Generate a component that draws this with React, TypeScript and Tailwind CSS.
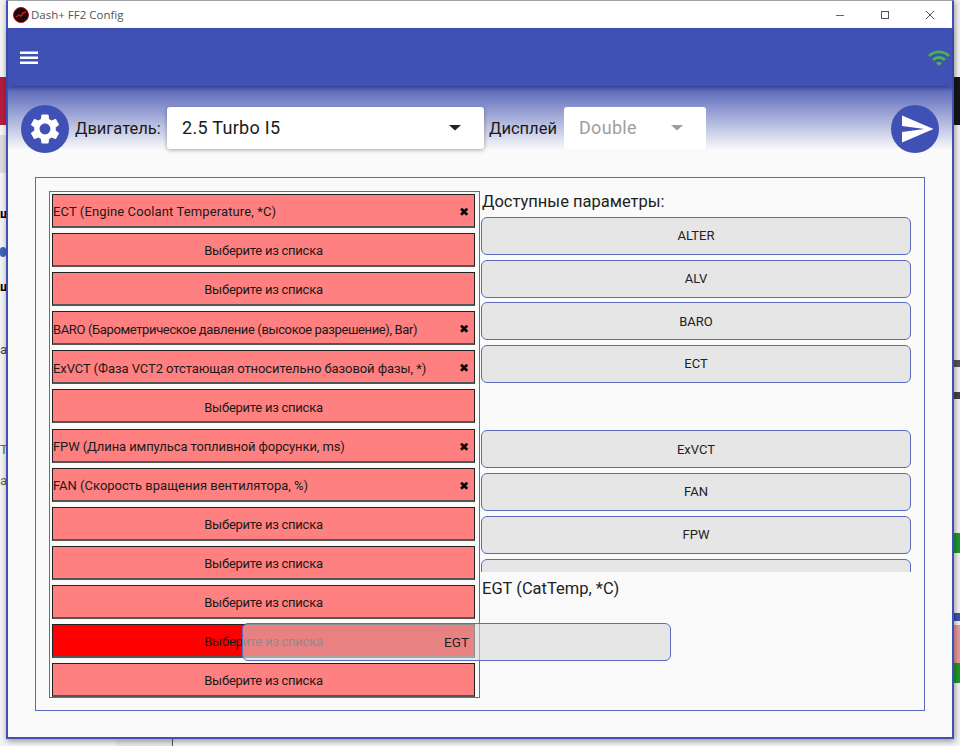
const rows: { label?: string; track?: string; active?: boolean }[] = [
  { label: 'ECT (Engine Coolant Temperature, *C)', track: 'tracking-[0.12px]' },
  {},
  {},
  { label: 'BARO (Барометрическое давление (высокое разрешение), Bar)', track: 'tracking-[-0.37px]' },
  { label: 'ExVCT (Фаза VCT2 отстающая относительно базовой фазы, *)', track: 'tracking-[-0.07px]' },
  {},
  { label: 'FPW (Длина импульса топливной форсунки, ms)', track: 'tracking-[-0.1px]' },
  { label: 'FAN (Скорость вращения вентилятора, %)' },
  {},
  {},
  {},
  { active: true },
  {},
]

const params = ['ALTER', 'ALV', 'BARO', 'ECT', '', 'ExVCT', 'FAN', 'FPW', 'EGT']

function ParamRow({ label, track, active }: { label?: string; track?: string; active?: boolean }) {
  return (
    <div
      className={`h-[34px] shrink-0 flex items-center pt-[3px] border border-[#222] border-b-2 border-b-[#555] text-[13px] text-[#1a1a1a] ${
        active ? 'bg-[#ff0000]' : 'bg-[#ff8080]'
      }`}
    >
      {label ? (
        <>
          <span className={`flex-1 whitespace-nowrap ${track ?? ''}`}>{label}</span>
          <span className="mr-[5px] text-[12px] text-black font-['DejaVu_Sans',sans-serif]">✖</span>
        </>
      ) : (
        <span className="flex-1 text-center tracking-[-0.25px]">Выберите из списка</span>
      )}
    </div>
  )
}

function Select({ value, disabled, width }: { value: string; disabled?: boolean; width: string }) {
  return (
    <div
      className={`${width} h-[42px] -mt-[2px] pb-[2px] flex items-center justify-between pl-[15px] pr-[17px] bg-white rounded-[3px] text-[18px] tracking-[0.3px] ${
        disabled ? 'text-[#9e9e9e]' : 'text-[#1a1a1a] shadow-[0_1px_4px_rgba(0,0,0,0.35)]'
      }`}
    >
      <span>{value}</span>
      <svg width="24" height="24" viewBox="0 0 24 24" className={disabled ? 'fill-[#9e9e9e]' : 'fill-[#222]'}>
        <path d="M6 10l6 5.5 6-5.5z" />
      </svg>
    </div>
  )
}

function RoundButton({ children }: { children: React.ReactNode }) {
  return (
    <div className="w-[48px] h-[48px] shrink-0 rounded-full bg-[#3f51b5] flex items-center justify-center">
      {children}
    </div>
  )
}

export default function App() {
  return (
    <div className="relative w-[960px] h-[746px] overflow-hidden bg-[#f3f3f3] font-['Roboto',sans-serif]">
      {/* bits of other windows behind */}
      <div className="absolute left-0 top-[77px] w-[6px] h-[48px] bg-[#b81c3c]" />
      <div className="absolute left-0 top-[135px] w-[6px] h-[38px] bg-[#dcdcdc]" />
      <div className="absolute left-0 top-[204px] text-[13px] font-bold text-black">ш</div>
      <div className="absolute left-0 top-[247px] w-[6px] h-[10px] rounded-full bg-[#3f63b5]" />
      <div className="absolute left-0 top-[277px] text-[13px] font-bold text-black">ш</div>
      <div className="absolute left-0 top-[340px] text-[13px] text-[#444]">а</div>
      <div className="absolute left-0 top-[440px] text-[13px] text-[#666]">Т</div>
      <div className="absolute left-0 top-[471px] text-[13px] text-[#666]">а</div>
      <div className="absolute left-[954px] top-[77px] w-[6px] h-[48px] bg-[#161616]" />
      <div className="absolute left-[954px] top-[360px] w-[6px] h-[7px] bg-[#555]" />
      <div className="absolute left-[954px] top-[392px] w-[6px] h-[7px] bg-[#444]" />
      <div className="absolute left-[954px] top-[533px] w-[6px] h-[20px] bg-[#1f9a2e]" />
      <div className="absolute left-[954px] top-[613px] w-[6px] h-[8px] bg-[#3f51b5]" />
      <div className="absolute left-[954px] top-[625px] w-[6px] h-[38px] bg-[#ec9a9a]" />
      <div className="absolute left-[954px] top-[663px] w-[6px] h-[20px] bg-[#1f9a2e]" />
      <div className="absolute left-[172px] top-[738px] w-[1px] h-[8px] bg-[#555]" />
      <div className="absolute left-[116px] top-[740px] w-[56px] h-[6px] bg-[#e8e8e8]" />

      {/* app window */}
      <div className="relative ml-[6px] w-[948px] h-[739px] flex flex-col border-x-2 border-b-2 border-[#3f51b5] border-t border-t-[#a0a0a0] bg-[#fafafa] shadow-[1px_2px_6px_rgba(0,0,0,0.4)]">
        <div className="h-[28px] shrink-0 flex items-center bg-white border-b border-[#3f51b5]">
          <svg width="16" height="16" viewBox="0 0 16 16" className="ml-[5px] mr-[2px] shrink-0">
            <circle cx="8" cy="8" r="7.5" fill="#1a0a0a" stroke="#b01010" strokeWidth="1" />
            <path d="M3 10l3-2 2 1 2-3 3-1" stroke="#e01010" strokeWidth="1.5" fill="none" />
          </svg>
          <span className="text-[11.5px] text-[#555] font-['Open_Sans',sans-serif]">Dash+ FF2 Config</span>
          <div className="ml-auto flex items-center">
            <svg width="10" height="10" viewBox="0 0 10 10" className="mr-[35px] stroke-[#666]">
              <path d="M1 5.5h8" />
            </svg>
            <svg width="10" height="10" viewBox="0 0 10 10" className="mr-[35px] stroke-[#555] fill-none">
              <rect x="1.5" y="1.5" width="7" height="7" />
            </svg>
            <svg width="10" height="10" viewBox="0 0 10 10" className="mr-[17px] stroke-[#555]">
              <path d="M1 1l8 8M9 1l-8 8" />
            </svg>
          </div>
        </div>

        <div className="relative z-10 h-[57px] shrink-0 flex items-center justify-between pl-[9px] pr-[1px] bg-[#3f51b5] shadow-[0_2px_4px_rgba(30,40,110,0.6)]">
          <svg width="24" height="24" viewBox="0 0 24 24" className="fill-white">
            <path d="M3 18h18v-2.4H3V18zm0-5h18v-2.4H3V13zm0-7.4V8h18V5.6H3z" />
          </svg>
          <svg width="24" height="24" viewBox="0 0 24 24" className="fill-[#4caf50]">
            <path d="M1 9l2 2c4.97-4.97 13.03-4.97 18 0l2-2C16.93 2.93 7.08 2.93 1 9zm8 8l3 3 3-3c-1.65-1.66-4.34-1.66-6 0zm-4-4l2 2c2.76-2.76 7.24-2.76 10 0l2-2C15.14 9.14 8.87 9.14 5 13z" />
          </svg>
        </div>

        <div className="flex-1 flex flex-col bg-[linear-gradient(to_bottom,#5262b9_0px,#fafafa_64px)]">
          <div className="flex items-center pt-[19px] pl-[13px] pr-[13px] text-[16.5px] text-[#1a1a1a]">
            <RoundButton>
              <svg width="36" height="36" viewBox="0 0 24 24" className="fill-white">
                <path d="M19.14,12.94c0.04-0.3,0.06-0.61,0.06-0.94c0-0.32-0.02-0.64-0.07-0.94l2.03-1.58c0.18-0.14,0.23-0.41,0.12-0.61 l-1.92-3.32c-0.12-0.22-0.37-0.29-0.59-0.22l-2.39,0.96c-0.5-0.38-1.03-0.7-1.62-0.94L14.4,2.81c-0.04-0.24-0.24-0.41-0.48-0.41 h-3.84c-0.24,0-0.43,0.17-0.47,0.41L9.25,5.35C8.66,5.59,8.12,5.92,7.63,6.29L5.24,5.33c-0.22-0.08-0.47,0-0.59,0.22L2.74,8.87 C2.62,9.08,2.66,9.34,2.86,9.48l2.03,1.58C4.84,11.36,4.8,11.69,4.8,12s0.02,0.64,0.07,0.94l-2.03,1.58 c-0.18,0.14-0.23,0.41-0.12,0.61l1.92,3.32c0.12,0.22,0.37,0.29,0.59,0.22l2.39-0.96c0.5,0.38,1.03,0.7,1.62,0.94l0.36,2.54 c0.05,0.24,0.24,0.41,0.48,0.41h3.84c0.24,0,0.44-0.17,0.47-0.41l0.36-2.54c0.59-0.24,1.13-0.56,1.62-0.94l2.39,0.96 c0.22,0.08,0.47,0,0.59-0.22l1.92-3.32c0.12-0.22,0.07-0.47-0.12-0.61L19.14,12.94z M12,15.6c-1.98,0-3.6-1.62-3.6-3.6 s1.62-3.6,3.6-3.6s3.6,1.62,3.6,3.6S13.98,15.6,12,15.6z" />
              </svg>
            </RoundButton>
            <span className="ml-[6px] mr-[6px] w-[86px] whitespace-nowrap">Двигатель:</span>
            <Select value="2.5 Turbo I5" width="w-[317px]" />
            <span className="ml-[5px] mr-[7px] w-[68px] whitespace-nowrap">Дисплей</span>
            <Select value="Double" disabled width="w-[142px]" />
            <div className="ml-auto">
              <RoundButton>
                <svg width="36" height="36" viewBox="0 0 24 24" className="ml-[3px] fill-white">
                  <path d="M2.01 21L23 12 2.01 3 2 10l15 2-15 2z" />
                </svg>
              </RoundButton>
            </div>
          </div>

          <div className="relative mt-[24px] ml-[27px] w-[890px] h-[534px] flex items-start pl-[13px] pt-[13px] border border-[#5c6bc0]">
            <div className="w-[431px] h-[507px] shrink-0 border border-[#ff3030] pl-[2px] pr-[4px] pt-[2px] flex flex-col gap-[5.1px]">
              {rows.map((row, i) => (
                <ParamRow key={i} label={row.label} track={row.track} active={row.active} />
              ))}
            </div>

            <div className="ml-[1px] w-[430px] flex flex-col">
              <div className="h-[26px] pl-[1px] text-[16.5px] text-[#222] leading-[21px]">Доступные параметры:</div>
              <div className="h-[355px] overflow-hidden flex flex-col gap-[4.7px]">
                {params.map((name, i) =>
                  name ? (
                    <div
                      key={i}
                      className="h-[38px] shrink-0 flex items-center justify-center rounded-md border border-[#5c6bc0] bg-[#e6e6e6] text-[13px] text-[#222]"
                    >
                      {name === 'EGT' ? '' : name}
                    </div>
                  ) : (
                    <div key={i} className="h-[38px] shrink-0" />
                  ),
                )}
              </div>
              <div className="mt-[6px] pl-[1px] text-[16.5px] text-[#222] leading-[22px]">EGT (CatTemp, *C)</div>
            </div>

            {/* item being dragged */}
            <div className="absolute left-[206px] top-[445px] w-[429px] h-[38px] flex items-center justify-center rounded-md border border-[#5c6bc0] bg-[#d9d9d9]/60 text-[13.5px] text-[#222]">
              EGT
            </div>
          </div>
        </div>
      </div>
    </div>
  )
}
